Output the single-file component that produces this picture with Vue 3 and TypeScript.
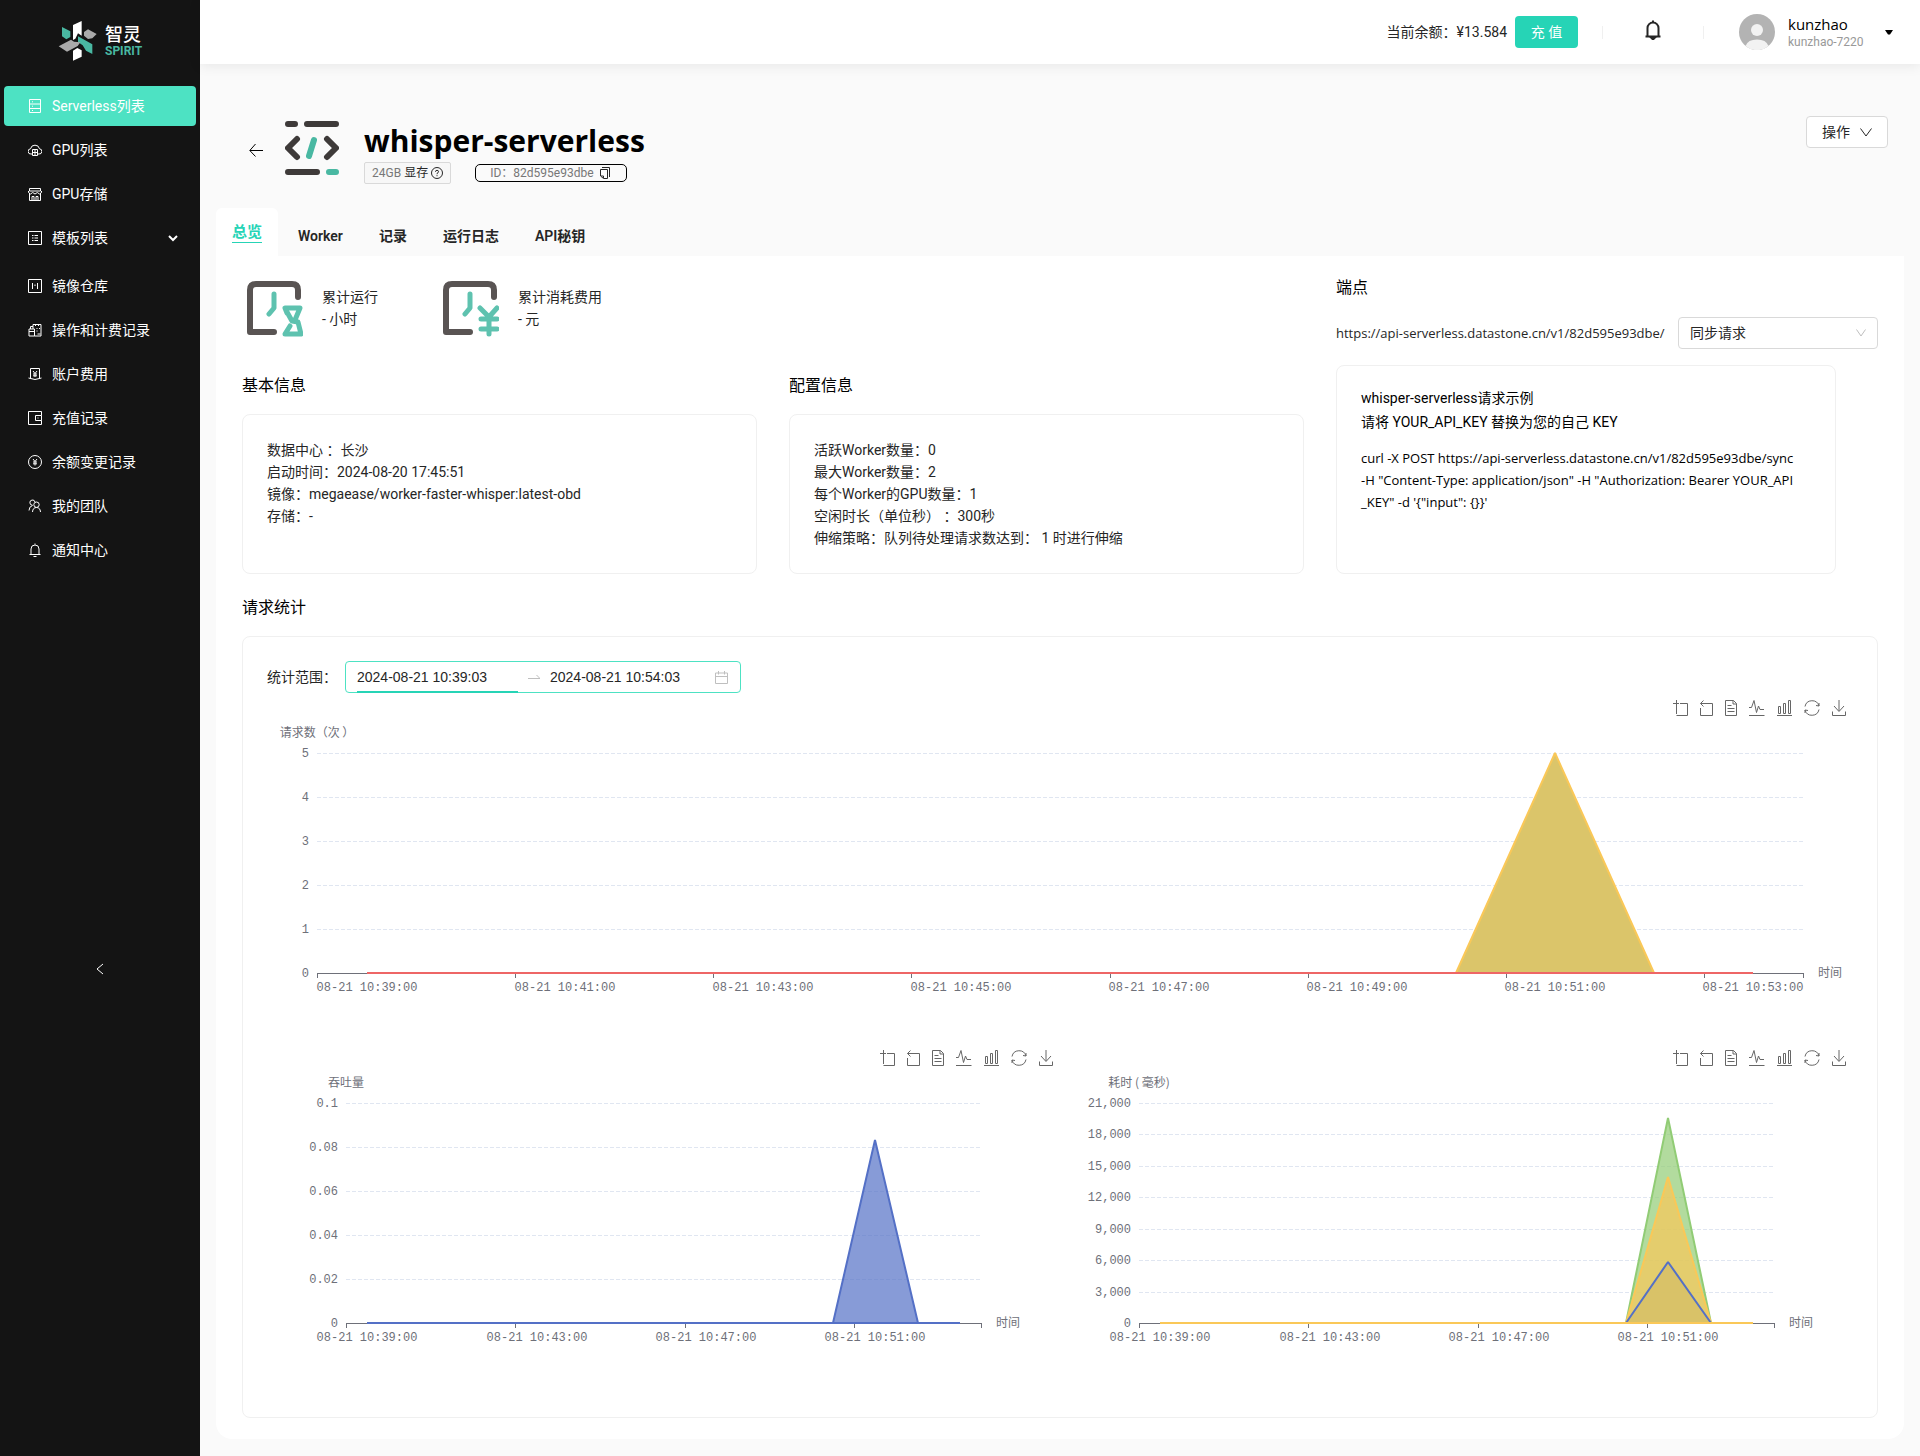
<script setup lang="ts">
import { computed, onBeforeUnmount, onMounted, ref } from 'vue'

interface MenuItem {
  label: string
  icon: string
  active?: boolean
  expandable?: boolean
}

const menu: MenuItem[] = [
  { label: 'Serverless列表', active: true, icon: 'M1.500 .500h11v13h-11zM1.500 5h11M1.500 9.500h11M4 2.800h1M4 7.200h1M4 11.500h1' },
  { label: 'GPU列表', icon: 'M4 11H3A2.6 2.6 0 0 1 2.500 5.800A4.600 4.600 0 0 1 11.500 5.800A2.600 2.600 0 0 1 11 11H10M4.500 6.500h5v6h-5zM4.500 9.500h5M7 6.500v6' },
  { label: 'GPU存储', icon: 'M1.500 6v7.500h11V6M1.500 1.500h11V4h-11zM.500 4v1.500l2 1.500 2.200-1.500L7 7l2.300-1.500L11.500 7l2-1.500V4M4 13V9.500h2V13M8 13V9.500h2V13' },
  { label: '模板列表', expandable: true, icon: 'M.500 .500h13v13H.500zM4 4.500h1.500M4 7h1.500M4 9.500h1.500M6.500 4.500H10M6.500 7H10M6.500 9.500H10' },
  { label: '镜像仓库', icon: 'M.500 .500h13v13H.500zM4.500 4v6M7 5.500v1.500M9.500 4v6' },
  { label: '操作和计费记录', icon: 'M1 6h5.500v7H1zM1 8.500h5.500M2.500 6V3.500h2.500V6M5 3.500V1.500h8V13H6.500M7.500 1v2M10.500 1v2M8.500 5.500h1M11 5.500h1M8.500 8h1M9.500 11h3' },
  { label: '账户费用', icon: 'M2.500 11V1.500h9V11M.500 11q6.500 3 13 0M5 4l2 2.500L9 4M7 6.500V10M5 7h4M5 8.800h4' },
  { label: '充值记录', icon: 'M13.500 4.500V.500H.500v13h13V9.500M13.500 4.500H7.500v5h6zM9.500 7h1' },
  { label: '余额变更记录', icon: 'M7 .500a6.500 6.500 0 1 1 0 13a6.500 6.500 0 0 1 0-13M5 4l2 2.500L9 4M7 6.500V10.500M5 7h4M5 8.800h4' },
  { label: '我的团队', icon: 'M8.500 3a2.700 2.700 0 1 1 0 5.400a2.700 2.700 0 0 1 0-5.400M4.500 13q.300-4.500 4-4.500t4 4.500M7 3A2.600 2.600 0 1 0 4.500 6.200M1 11.500q0-4 3.500-5' },
  { label: '通知中心', icon: 'M7 .500v1.200M3 11.500V6a4 4 0 0 1 8 0v5.500M1.500 11.500h11M5.500 13.500h3' },
]

const tabs = ['总览', 'Worker', '记录', '运行日志', 'API秘钥']

const basicInfo = [
  '数据中心 ：长沙',
  '启动时间：2024-08-20 17:45:51',
  '镜像：megaease/worker-faster-whisper:latest-obd',
  '存储：-',
]

const configInfo = [
  '活跃Worker数量：0',
  '最大Worker数量：2',
  '每个Worker的GPU数量：1',
  '空闲时长（单位秒） ：300秒',
  '伸缩策略：队列待处理请求数达到： 1 时进行伸缩',
]

const curlLines = [
  'curl -X POST https://api-serverless.datastone.cn/v1/82d595e93dbe/sync',
  '-H "Content-Type: application/json" -H "Authorization: Bearer YOUR_API',
  '_KEY" -d \'{"input": {}}\'',
]

const startTime = ref('2024-08-21 10:39:03')
const endTime = ref('2024-08-21 10:54:03')
const mode = ref('sync')

const tools = [
  { name: '区域缩放', width: 15, icon: 'M0 3.500h6M3.500 0v14M3.500 15.500h11v-12H7' },
  { name: '区域缩放还原', width: 13, icon: 'M3.500 .500L.500 3.500l3 3M.500 3.500h12v12H.500V8' },
  { name: '数据视图', width: 12, icon: 'M.500 .500h8l3 3v12H.500zM8 .500V4h3.500M2.500 5.500h4M2.500 8.500h7M2.500 11.500h7' },
  { name: '切换为折线图', width: 16, icon: 'M0 7.500h2.500L5 .500 7.500 12.500 9.500 6l1.500 3.500h4M0 15.500h15.500' },
  { name: '切换为柱状图', width: 15, icon: 'M1.500 6.500h2v7h-2zM6.500 3.500h2v10h-2zM11.500 .500h2v13h-2zM0 15.500h15' },
  { name: '还原', width: 16, icon: 'M1 6.500A7.200 7.200 0 0 1 15 6M15 9.500A7.200 7.200 0 0 1 1 10M12 5.500l3 .500V3M4 10.500L1 10v3' },
  { name: '保存为图片', width: 14, icon: 'M7 0v11M2 6l5 5.500L12 6M.500 11.500v4h13v-4' },
]

interface Series {
  stroke: string
  fill: string
  peak: number
  flat: boolean
}

interface ChartSpec {
  title: string
  max: number
  step: number
  labelEvery: number
  side: (width: number) => number
  series: Series[]
  baseline: string
}

const BANDS = 15
const PEAK_BAND = 12
const PLOT_TOP = 30
const PLOT_HEIGHT = 220
const PLOT_BOTTOM = PLOT_TOP + PLOT_HEIGHT

const specs: ChartSpec[] = [
  {
    title: '请求数（次 ）', max: 5, step: 1, labelEvery: 2, side: () => 50, baseline: '#ee6666',
    series: [{ stroke: '#fac858', fill: '#dbc56a', peak: 5, flat: true }],
  },
  {
    title: '吞吐量', max: 0.1, step: 0.02, labelEvery: 4, side: (w) => Math.round(w / 10), baseline: '#5470c6',
    series: [{ stroke: '#5470c6', fill: '#5470c6', peak: 0.0833, flat: false }],
  },
  {
    title: '耗时 ( 毫秒)', max: 21000, step: 3000, labelEvery: 4, side: (w) => Math.round(w / 10), baseline: '#fac858',
    series: [
      { stroke: '#91cc75', fill: '#91cc75', peak: 19560, flat: false },
      { stroke: '#fac858', fill: '#fac858', peak: 13950, flat: false },
      { stroke: '#5470c6', fill: '#d4be67', peak: 5850, flat: false },
    ],
  },
]

const charts = ref<HTMLElement | null>(null)
const fullWidth = ref(1586)
let observer: ResizeObserver | undefined

onMounted(() => {
  if (!charts.value) return
  fullWidth.value = charts.value.clientWidth
  observer = new ResizeObserver(() => {
    if (charts.value) fullWidth.value = charts.value.clientWidth
  })
  observer.observe(charts.value)
})
onBeforeUnmount(() => observer?.disconnect())

const layouts = computed(() =>
  specs.map((spec, index) => {
    const width = index === 0 ? fullWidth.value : Math.floor(fullWidth.value / 2)
    const left = spec.side(width)
    const right = width - left
    const band = (right - left) / BANDS
    const centre = (i: number) => Math.round(left + band * (i + 0.5))
    const y = (v: number) => Math.round(PLOT_BOTTOM - (v / spec.max) * PLOT_HEIGHT)
    const rows = Array.from({ length: Math.round(spec.max / spec.step) + 1 }, (_, i) => ({
      y: y(i * spec.step),
      label: spec.max > 1000 ? (i * spec.step).toLocaleString('en-US') : String(Number((i * spec.step).toFixed(2))),
    }))
    const ticks: number[] = []
    const labels: { x: number; text: string }[] = []
    for (let i = 0; i < BANDS; i += spec.labelEvery) {
      ticks.push(Math.round(left + band * i))
      labels.push({ x: centre(i), text: `08-21 10:${39 + i}:00` })
    }
    ticks.push(right)
    const areas = spec.series.map((s) => ({
      ...s,
      points: `${centre(PEAK_BAND - 1)},${PLOT_BOTTOM} ${centre(PEAK_BAND)},${y(s.peak)} ${centre(PEAK_BAND + 1)},${PLOT_BOTTOM}`,
    }))
    return { ...spec, width, left, right, rows, ticks, labels, areas, from: centre(0), to: centre(BANDS - 1) }
  }),
)
</script>

<template>
  <div class="app">
    <aside class="sidebar">
      <a class="logo" href="#">
        <svg width="40" height="42" viewBox="0 0 120 126" aria-hidden="true">
          <path fill="#fff" d="M45 15L71 3v44L60 40l-8 16-7 4zM45 92l13-8 13 7v19l-26 12z" />
          <path fill="#49b8a2" d="M12 21l25 13v17l-12 7-13-9zM60 49l43 24v29L84 92 74 76 60 66z" />
          <path fill="#aaa" d="M78 36l12-8 26 14-13 13-13 2-12-10zM2 79l37-20 9 6 19 2-8 11-32 17z" />
        </svg>
        <span class="brand">
          <span class="brand-cn">智灵</span>
          <span class="brand-en">SPIRIT</span>
        </span>
      </a>
      <nav class="menu">
        <a v-for="item in menu" :key="item.label" href="#" class="menu-item" :class="{ active: item.active, expandable: item.expandable }">
          <svg class="line-icon" width="14" height="14" viewBox="0 0 14 14"><path :d="item.icon" /></svg>
          <span>{{ item.label }}</span>
          <svg v-if="item.expandable" class="menu-arrow" width="10" height="8" viewBox="0 0 10 8"><path d="M1 2l4 4 4-4" /></svg>
        </a>
      </nav>
      <div class="collapse-area">
        <button class="collapse" type="button" aria-label="收起菜单">
          <svg width="10" height="12" viewBox="0 0 10 12"><path d="M8 1L2 6l6 5" /></svg>
        </button>
      </div>
    </aside>

    <div class="page">
      <header class="topbar">
        <span class="balance">当前余额：¥13.584</span>
        <button class="recharge" type="button">充 值</button>
        <span class="divider"></span>
        <button class="bell" type="button" aria-label="通知">
          <svg width="16" height="20" viewBox="0 0 16 20"><path d="M8 .500V2M2.500 16V8a5.500 5.500 0 0 1 11 0v8M.500 16.500h15" /><path d="M6 17.500h4l-2 2z" /></svg>
        </button>
        <span class="divider"></span>
        <button class="user" type="button">
          <svg width="36" height="36" viewBox="0 0 36 36" aria-hidden="true">
            <circle cx="18" cy="18" r="18" fill="#b3b3b3" />
            <circle cx="18" cy="16" r="6" fill="#f2f2f2" />
            <path d="M6.500 32a12 9 0 0 1 23 0A18 18 0 0 1 6.500 32z" fill="#f2f2f2" />
          </svg>
          <span class="user-text">
            <span class="user-name">kunzhao</span>
            <span class="user-id">kunzhao-7220</span>
          </span>
          <svg width="8" height="5" viewBox="0 0 8 5" aria-hidden="true"><path d="M0 0h8L5 4.500H3z" fill="#000" /></svg>
        </button>
      </header>

      <main class="content">
        <section class="heading">
          <a class="back" href="#" aria-label="返回">
            <svg width="14" height="14" viewBox="0 0 14 14"><path d="M14 7.500H1M6.500 1L.800 7.500l5.700 6" /></svg>
          </a>
          <svg class="code-icon" width="54" height="54" viewBox="0 0 54 54" aria-hidden="true">
            <path stroke="#3e3a39" d="M3 3h7M22 3h29M12 18l-9 9 9 9M42 18l9 9-9 9M3 51h29" />
            <path stroke="#49b8a2" d="M29 19l-5 16M44 51h7" />
          </svg>
          <div class="heading-text">
            <h1>whisper-serverless</h1>
            <div class="tags">
              <span class="memory"><span class="muted">24GB</span> 显存
                <svg width="12" height="12" viewBox="0 0 12 12" aria-hidden="true"><circle cx="6" cy="6" r="5.500" /><path d="M4.500 4.800q0-1.500 1.500-1.500t1.500 1.400q0 1-1.500 1.800v.700M6 8.200v1" /></svg>
              </span>
              <span class="instance">ID：82d595e93dbe
                <button type="button" aria-label="复制"><svg width="10" height="12" viewBox="0 0 10 12"><path d="M2 .500h7.500V10M.500 2.500h7v9H3.500L.500 9zM3.500 11V9H1" /></svg></button>
              </span>
            </div>
          </div>
          <button class="actions" type="button">操作
            <svg width="12" height="9" viewBox="0 0 12 9" aria-hidden="true"><path d="M.500 .500L6 8l5.500-7.500" /></svg>
          </button>
        </section>

        <div class="tabs" role="tablist">
          <button v-for="(tab, i) in tabs" :key="tab" type="button" role="tab" class="tab" :class="{ active: i === 0 }" :aria-selected="i === 0">
            <span>{{ tab }}</span>
          </button>
        </div>

        <div class="panel">
          <div class="overview">
            <div class="overview-left">
              <div class="stats">
                <div class="stat">
                  <svg width="56" height="56" viewBox="0 0 56 56" aria-hidden="true">
                    <path class="frame" d="M51 16V9q0-6-6-6H9q-6 0-6 6v42h24" />
                    <path class="accent" d="M27 13v14l-5 6M40 32l-2-5h15l-5 12M40 31l5 9 6 1 3 12H38l5-8" />
                  </svg>
                  <p>累计运行<br />- 小时</p>
                </div>
                <div class="stat">
                  <svg width="56" height="56" viewBox="0 0 56 56" aria-hidden="true">
                    <path class="frame" d="M51 16V9q0-6-6-6H9q-6 0-6 6v42h24" />
                    <path class="accent" d="M27 13v14l-5 6M37 27l9 9 8-9M46 36v17M38 38h16M38 48h16" />
                  </svg>
                  <p>累计消耗费用<br />- 元</p>
                </div>
              </div>
              <div class="infos">
                <section class="info">
                  <h2>基本信息</h2>
                  <div class="card"><p v-for="line in basicInfo" :key="line">{{ line }}</p></div>
                </section>
                <section class="info">
                  <h2>配置信息</h2>
                  <div class="card"><p v-for="line in configInfo" :key="line">{{ line }}</p></div>
                </section>
              </div>
            </div>
            <section class="endpoint">
              <h2>端点</h2>
              <div class="endpoint-row">
                <label for="mode">https://api-serverless.datastone.cn/v1/82d595e93dbe/</label>
                <div class="select">
                  <select id="mode" v-model="mode">
                    <option value="sync">同步请求</option>
                    <option value="async">异步请求</option>
                  </select>
                  <svg width="10" height="8" viewBox="0 0 10 8" aria-hidden="true"><path d="M.500 .500L5 7 9.500 .500" /></svg>
                </div>
              </div>
              <div class="card sample">
                <p>whisper-serverless请求示例</p>
                <p>请将 YOUR_API_KEY 替换为您的自己 KEY</p>
                <code><span v-for="line in curlLines" :key="line">{{ line }}</span></code>
              </div>
            </section>
          </div>

          <section class="statistics">
            <h2>请求统计</h2>
            <div class="card">
              <div class="range-row">
                <label for="start">统计范围：</label>
                <div class="range">
                  <input id="start" v-model="startTime" class="focused" type="text" />
                  <svg class="swap" width="12" height="6" viewBox="0 0 12 6" aria-hidden="true"><path d="M0 4.500h12L8.500 1" /></svg>
                  <input v-model="endTime" type="text" aria-label="结束时间" />
                  <svg width="13" height="13" viewBox="0 0 13 13" aria-hidden="true"><path d="M.500 2h12v10.500H.500zM.500 5.500h12M3.500 0v3.500M9.500 0v3.500" /></svg>
                </div>
              </div>
              <div ref="charts" class="charts">
                <figure v-for="chart in layouts" :key="chart.title" class="chart">
                  <div class="toolbox">
                    <button v-for="tool in tools" :key="tool.name" type="button" :aria-label="tool.name">
                      <svg :width="tool.width" height="16" :viewBox="`0 0 ${tool.width} 16`"><path :d="tool.icon" /></svg>
                    </button>
                  </div>
                  <svg class="plot" :width="chart.width" height="320">
                    <text class="cn" :x="chart.left" y="14" text-anchor="middle">{{ chart.title }}</text>
                    <g v-for="row in chart.rows" :key="row.y">
                      <line v-if="row.y !== PLOT_BOTTOM" class="split" :x1="chart.left" :x2="chart.right" :y1="row.y" :y2="row.y" />
                      <text :x="chart.left - 8" :y="row.y + 4" text-anchor="end">{{ row.label }}</text>
                    </g>
                    <polygon v-for="area in chart.areas" :key="area.stroke" :points="area.points" :fill="area.fill" :fill-opacity="area.flat ? 1 : 0.7" />
                    <line class="axis" :x1="chart.left" :x2="chart.right" :y1="PLOT_BOTTOM" :y2="PLOT_BOTTOM" />
                    <line v-for="tick in chart.ticks" :key="tick" class="axis" :x1="tick" :x2="tick" :y1="PLOT_BOTTOM" :y2="PLOT_BOTTOM + 5" />
                    <text v-for="label in chart.labels" :key="label.x" :x="label.x" :y="PLOT_BOTTOM + 18" text-anchor="middle">{{ label.text }}</text>
                    <polyline v-for="area in chart.areas" :key="area.stroke" class="curve" :points="area.points" :stroke="area.stroke" />
                    <line class="curve" :stroke="chart.baseline" :x1="chart.from" :x2="chart.to" :y1="PLOT_BOTTOM" :y2="PLOT_BOTTOM" />
                    <text class="cn" :x="chart.right + 15" :y="PLOT_BOTTOM + 4">时间</text>
                  </svg>
                </figure>
              </div>
            </div>
          </section>
        </div>
      </main>
    </div>
  </div>
</template>

<style>
body {
  margin: 0;
  background: #fafafa;
}
</style>

<style scoped>
* {
  box-sizing: border-box;
}
.app {
  display: flex;
  min-height: 100vh;
  font-family: Roboto, 'Noto Sans CJK SC', sans-serif;
  font-size: 14px;
  line-height: 22px;
  color: #262626;
}
button,
input,
select {
  font: inherit;
  color: inherit;
}
button {
  padding: 0;
  border: 0;
  background: none;
  cursor: pointer;
}
a {
  color: inherit;
  text-decoration: none;
}
p,
h1,
h2,
figure {
  margin: 0;
}
svg {
  display: block;
  flex: none;
  fill: none;
}

/* Sidebar */
.sidebar {
  display: flex;
  flex: none;
  flex-direction: column;
  width: 200px;
  background: #141414;
  color: #fff;
}
.logo {
  display: flex;
  gap: 7px;
  align-items: center;
  height: 82px;
  padding-left: 58px;
}
.brand {
  display: flex;
  flex-direction: column;
}
.brand-cn {
  font-family: 'Noto Sans CJK SC', sans-serif;
  font-size: 18px;
  font-weight: 500;
  line-height: 20px;
}
.brand-en {
  font-size: 12px;
  font-weight: 700;
  line-height: 16px;
  color: #49b8a2;
}
.menu {
  display: flex;
  flex-direction: column;
  gap: 4px;
  padding: 4px 4px 0;
}
.menu-item {
  display: flex;
  gap: 10px;
  align-items: center;
  height: 40px;
  padding: 0 18px 0 24px;
  border-radius: 4px;
}
.menu-item.active {
  background: #4de2c3;
}
.menu-item.expandable {
  margin-bottom: 4px;
}
.line-icon {
  stroke: #fff;
}
.menu-arrow {
  margin-left: auto;
  stroke: #fff;
  stroke-width: 2;
}
.collapse-area {
  display: flex;
  flex: 1;
  align-items: center;
  justify-content: center;
  padding-bottom: 88px;
}
.collapse svg {
  stroke: #fff;
  stroke-width: 1;
}

/* Top bar */
.page {
  flex: 1;
  min-width: 0;
}
.topbar {
  display: flex;
  align-items: center;
  justify-content: flex-end;
  height: 64px;
  padding-right: 27px;
  background: #fff;
  box-shadow: 0 2px 12px rgba(0, 0, 0, 0.08);
}
.recharge {
  width: 63px;
  height: 32px;
  margin: 0 24px 0 8px;
  border-radius: 4px;
  background: #26d4b6;
  color: #fff;
}
.divider {
  width: 1px;
  height: 13px;
  background: #f0f0f0;
}
.bell {
  margin: 0 42px;
}
.bell svg {
  margin-bottom: 4px;
  stroke: #262626;
  stroke-width: 2;
}
.user {
  display: flex;
  align-items: center;
  margin-left: 35px;
  text-align: left;
}
.user-text {
  display: flex;
  flex-direction: column;
  width: 97px;
  margin-left: 13px;
  color: #000;
}
.user-name {
  font-family: 'Open Sans', sans-serif;
  font-size: 15px;
  line-height: 20px;
}
.user-id {
  font-size: 12px;
  line-height: 16px;
  color: #999;
}

/* Page heading */
.content {
  padding: 52px 16px 17px;
}
.heading {
  display: flex;
  align-items: center;
  margin-bottom: 24px;
  padding: 0 16px 0 33px;
}
.back svg {
  stroke: #000;
}
.code-icon {
  margin: 0 25px 4px 22px;
  stroke-width: 6;
  stroke-linecap: round;
  stroke-linejoin: round;
}
h1 {
  padding-top: 4px;
  font-family: 'Open Sans', sans-serif;
  font-size: 30px;
  font-weight: 700;
  line-height: 42px;
  color: #000;
}
.tags {
  display: flex;
  gap: 24px;
  align-items: center;
}
.memory,
.instance {
  display: flex;
  align-items: center;
  font-size: 12px;
  white-space: nowrap;
}
.memory {
  gap: 3px;
  height: 22px;
  padding: 0 7px;
  border: 1px solid #d9d9d9;
  border-radius: 2px;
  background: #f7f7f7;
}
.memory svg,
.instance svg {
  stroke: #262626;
}
.muted {
  color: #777;
}
.instance {
  gap: 6px;
  height: 18px;
  padding: 0 16px 0 14px;
  border: 1px solid #000;
  border-radius: 5px;
  color: #777;
}
.actions {
  display: flex;
  gap: 10px;
  align-items: center;
  align-self: flex-start;
  height: 32px;
  margin-left: auto;
  padding: 0 15px;
  border: 1px solid #d9d9d9;
  border-radius: 4px;
  background: #fff;
}
.actions svg {
  stroke: #262626;
}

/* Tabs */
.tabs {
  display: flex;
  gap: 4px;
}
.tab {
  height: 48px;
  padding: 8px 16px 0;
  border-radius: 6px 6px 0 0;
  font-weight: 600;
}
.tab.active {
  padding-top: 0;
  background: #fff;
  font-size: 15px;
  color: #26d4b6;
}
.tab.active span {
  display: block;
  line-height: 20px;
  border-bottom: 1px solid #26d4b6;
}

/* Overview panel */
.panel {
  padding: 18px 26px 21px;
  border-radius: 0 0 16px 16px;
  background: #fff;
}
.overview {
  display: flex;
  gap: 32px;
}
.overview-left {
  flex: 1;
  min-width: 0;
  padding-top: 7px;
}
.stats {
  display: flex;
  padding-left: 5px;
}
.stat {
  display: flex;
  gap: 19px;
  align-items: center;
  width: 196px;
}
.stat p {
  margin-bottom: 2px;
}
.stat svg {
  stroke-width: 6;
  stroke-linecap: round;
  stroke-linejoin: round;
}
.frame {
  stroke: #595453;
}
.accent {
  stroke: #5ec2af;
  stroke-width: 5;
}
h2 {
  font-family: 'Noto Sans CJK SC', sans-serif;
  font-size: 16px;
  font-weight: 400;
  line-height: 24px;
  color: #000;
}
.infos {
  display: grid;
  grid-template-columns: 1fr 1fr;
  gap: 32px;
  margin-top: 35px;
}
.card {
  margin-top: 18px;
  padding: 24px;
  border: 1px solid #f0f0f0;
  border-radius: 8px;
}
.info .card {
  height: 160px;
}
.endpoint {
  display: flex;
  flex-direction: column;
  width: 542px;
}
.endpoint-row {
  display: flex;
  gap: 8px;
  align-items: center;
  justify-content: space-between;
  margin-top: 19px;
}
.endpoint-row label,
.sample code {
  font-family: 'Open Sans', sans-serif;
  font-size: 13px;
}
.select {
  position: relative;
  width: 200px;
}
.select select {
  width: 100%;
  height: 32px;
  padding: 0 11px;
  border: 1px solid #d9d9d9;
  border-radius: 4px;
  background: #fff;
  appearance: none;
}
.select svg {
  position: absolute;
  top: 12px;
  right: 12px;
  stroke: #bfbfbf;
  pointer-events: none;
}
.sample {
  flex: 1;
  width: 500px;
  margin-top: 16px;
  padding: 20px 24px;
  color: #000;
}
.sample p {
  line-height: 24px;
}
.sample code {
  display: flex;
  flex-direction: column;
  margin-top: 13px;
  white-space: nowrap;
}

/* Statistics */
.statistics {
  margin-top: 20px;
}
.range-row {
  display: flex;
  gap: 8px;
  align-items: center;
}
.range {
  display: flex;
  align-items: center;
  width: 396px;
  height: 32px;
  padding: 0 12px 0 11px;
  border: 1px solid #4de2c3;
  border-radius: 4px;
}
.range input {
  width: 161px;
  height: 32px;
  padding: 0;
  border: 0;
  border-block: 2px solid transparent;
  outline: 0;
  background: none;
  font-family: 'Liberation Sans', Arial, sans-serif;
}
.range input.focused {
  border-bottom-color: #26d4b6;
}
.range svg {
  margin-left: auto;
  stroke: #bfbfbf;
}
.range .swap {
  margin: 0 10px;
}
.charts {
  display: flex;
  flex-wrap: wrap;
}
.toolbox {
  display: flex;
  gap: 12px;
  align-items: center;
  justify-content: flex-end;
  height: 30px;
  padding-right: 7px;
}
.toolbox svg {
  stroke: #666;
}
.plot text {
  fill: #6e7079;
  font-family: 'Liberation Mono', monospace;
  font-size: 12px;
}
.plot text.cn {
  font-family: 'Noto Sans CJK SC', sans-serif;
}
.split,
.axis {
  shape-rendering: crispEdges;
}
.split {
  stroke: #e0e6f1;
  stroke-dasharray: 4 2;
}
.axis {
  stroke: #6e7079;
}
.curve {
  fill: none;
  stroke-width: 2;
  stroke-linejoin: bevel;
}
</style>
